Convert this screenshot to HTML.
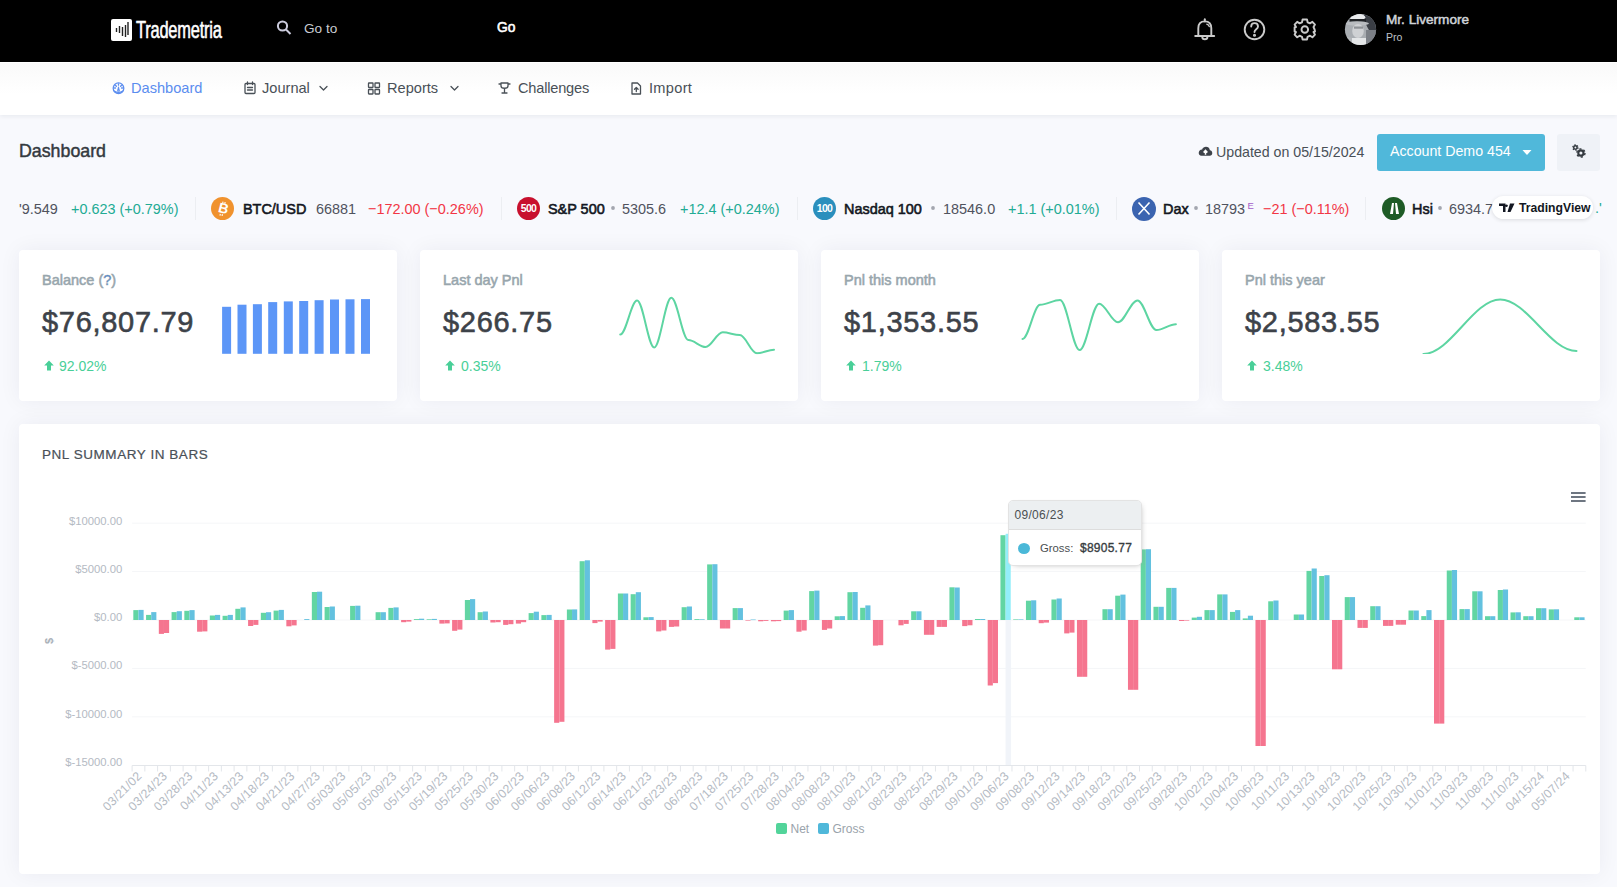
<!DOCTYPE html>
<html><head><meta charset="utf-8">
<style>
*{box-sizing:border-box;margin:0;padding:0}
html,body{width:1617px;height:887px;overflow:hidden}
body{background:#f8f9fd;font-family:"Liberation Sans",sans-serif;position:relative;color:#495057}
.abs{position:absolute;white-space:nowrap}
#hdr{position:absolute;left:0;top:0;width:1617px;height:62px;background:#000}
#nav{position:absolute;left:0;top:62px;width:1617px;height:53px;background:linear-gradient(#f9f9f9,#fff 60%);border-top:1px solid #fff;box-shadow:0 2px 4px rgba(15,34,58,.06)}
.card{position:absolute;background:#fff;border-radius:4px;box-shadow:0 0 22px rgba(18,38,63,.06)}
.yl{font-size:11.3px;fill:#b4bac3;font-family:"Liberation Sans",sans-serif}
.xl{font-size:12.3px;letter-spacing:0.15px;fill:#b4bac3;font-family:"Liberation Sans",sans-serif}
svg{position:absolute;left:0;top:0;overflow:visible}
.navt{font-size:14.6px;color:#495057;margin-top:1px}
.ctitle{font-size:14.5px;color:#98a6ad;-webkit-text-stroke:0.55px #98a6ad;margin-top:1.2px}
.cval{font-size:29px;color:#3d4249;-webkit-text-stroke:0.6px #3d4249;letter-spacing:0.7px;margin-top:0.8px}
.cpct{font-size:14px;color:#49cf98}
.tk{font-size:15.2px;transform:scaleX(0.95);transform-origin:0 50%;margin-top:0.3px}
.tkn{color:#131722;-webkit-text-stroke:0.6px #131722}
.tkp{color:#50535e}
.up{color:#22ab94}
.dn{color:#f23645}
.div{position:absolute;top:197px;width:1px;height:23px;background:#eceef2}
</style></head><body>
<div id="hdr"></div>
<!-- logo -->
<div class="abs" style="left:111px;top:19px;width:21px;height:22px;background:#fff;border-radius:2px"></div>
<svg width="1617" height="887" style="pointer-events:none">
  <g stroke="#222" stroke-width="1.4">
    <line x1="116.5" y1="28" x2="116.5" y2="32"/>
    <line x1="119.5" y1="26" x2="119.5" y2="33"/>
    <line x1="122.5" y1="27" x2="122.5" y2="36"/>
    <line x1="125.5" y1="25" x2="125.5" y2="37"/>
    <line x1="128" y1="22" x2="128" y2="35"/>
  </g>
</svg>
<div class="abs" style="left:136px;top:16.4px;font-size:24px;color:#fff;-webkit-text-stroke:0.6px #fff;transform:scaleX(0.685);transform-origin:0 0;letter-spacing:-0.3px">Trademetria</div>
<!-- search -->
<svg width="1617" height="887"><g fill="none" stroke="#ccd" stroke-width="2"><circle cx="282.5" cy="26" r="4.6"/><line x1="286" y1="29.5" x2="290.5" y2="34"/></g></svg>
<div class="abs" style="left:304px;top:20.5px;font-size:13.6px;color:#c9ccd2">Go to</div>
<div class="abs" style="left:497px;top:19.5px;font-size:13.8px;color:#fff;-webkit-text-stroke:0.55px #fff">Go</div>
<!-- right icons -->
<svg width="1617" height="887"><g fill="none" stroke="#cbcbcb" stroke-width="1.9" stroke-linecap="round" stroke-linejoin="round">
  <path d="M1195.2,36 L1214.2,36 M1198.3,35.5 L1198.3,28.3 C1198.3,23.6 1201.2,21.4 1204.8,21.4 C1208.4,21.4 1211.3,23.6 1211.3,28.3 L1211.3,35.5"/>
  <path d="M1202.3,37 C1202.3,40 1207.4,40 1207.4,37"/>
  <line x1="1204.8" y1="19.3" x2="1204.8" y2="21.4"/>
  <path d="M1206.8,24.2 C1208,24.6 1208.9,25.4 1209.3,26.6" stroke-width="1.4"/>
  <circle cx="1254.5" cy="29.5" r="9.8"/>
  <path d="M1251.2,26.5 C1251.2,22 1258,22 1258,26.5 C1258,29 1254.5,29.5 1254.5,32"/>
  <circle cx="1254.5" cy="35.2" r="0.6" fill="#c8c8c8"/>
  <circle cx="1304.8" cy="29.5" r="3.3"/>
  <path d="M1302.6,19.5 L1307,19.5 L1307.6,22.3 L1310,23.4 L1312.4,21.8 L1315,24.6 L1313.5,27 L1314.6,29.5 L1314.6,29.5 L1315,31.5 L1313.5,32 L1315,34.6 L1312.4,37.3 L1310,35.7 L1307.6,36.8 L1307,39.5 L1302.6,39.5 L1302,36.8 L1299.6,35.7 L1297.2,37.3 L1294.6,34.6 L1296,32 L1294.6,31.5 L1294.6,27.5 L1296,27 L1294.6,24.6 L1297.2,21.8 L1299.6,23.4 L1302,22.3 Z"/>
</g></svg>
<!-- avatar -->
<svg width="1617" height="887"><defs><clipPath id="av"><circle cx="1360.5" cy="29.5" r="15.6"/></clipPath></defs>
<g clip-path="url(#av)">
<rect x="1340" y="10" width="40" height="40" fill="#a9adb2"/>
<path d="M1364,12 L1380,12 L1380,34 L1372,34 C1368,30 1366,24 1364,20 Z" fill="#3a3e45"/>
<path d="M1366,30 L1380,30 L1380,46 L1366,46 Z" fill="#7c8087"/>
<ellipse cx="1357.5" cy="17.3" rx="7.8" ry="3.4" fill="#e9ebed"/>
<rect x="1349.5" y="19" width="16.5" height="2.8" fill="#1f2226"/>
<ellipse cx="1357" cy="23.5" rx="12" ry="2.2" fill="#b9bcc0"/>
<ellipse cx="1358" cy="31" rx="5.8" ry="7" fill="#cfd1d4"/>
<rect x="1354" y="26.5" width="9" height="2.2" fill="#8d9196"/>
<path d="M1352,38 L1366,38 L1366,48 L1352,48 Z" fill="#e4e6e8"/>
<path d="M1344,36 L1352,38 L1352,48 L1344,48 Z" fill="#b3b6ba"/>
</g></svg>
<div class="abs" style="left:1386px;top:12px;font-size:13.6px;color:#cfd3d8;-webkit-text-stroke:0.5px #cfd3d8">Mr. Livermore</div>
<div class="abs" style="left:1386px;top:31px;font-size:10.5px;color:#bfc3c8">Pro</div>

<!-- nav -->
<div id="nav"></div>
<svg width="1617" height="887"><g fill="none" stroke-width="1.3" stroke-linecap="round" stroke-linejoin="round">
  <g stroke="#5b8def"><circle cx="118.5" cy="88.2" r="5.3"/><path d="M114.6,91.2 C116.5,92.6 120.5,92.6 122.4,91.2 M118.5,84 L118.5,85.2 M115.6,85.5 L116.4,86.3 M121.4,85.5 L120.6,86.3 M114.5,88 L115.5,88 M122.5,88 L121.5,88"/><path d="M117.6,90.6 L118.5,86.8 L119.4,90.6 Z" fill="#5b8def" stroke-width="0.8"/></g>
  <g stroke="#495057"><rect x="245" y="83.5" width="10" height="10" rx="1"/><path d="M247.5,82 L247.5,84.5 M252.5,82 L252.5,84.5 M247.5,87.5 L252.5,87.5 M247.5,90 L252.5,90"/>
  <path d="M320,86.5 L323.5,90 L327,86.5"/>
  <rect x="368.5" y="83" width="4.5" height="4.5" rx=".5"/><rect x="375" y="83" width="4.5" height="4.5" rx=".5"/><rect x="368.5" y="89.5" width="4.5" height="4.5" rx=".5"/><rect x="375" y="89.5" width="4.5" height="4.5" rx=".5"/>
  <path d="M451,86.5 L454.5,90 L458,86.5"/>
  <path d="M501,83 L508,83 L508,86 C508,89 501,89 501,86 Z M499,84 L501,84 M508,84 L510,84 M504.5,89 L504.5,92 M502,93 L507,93"/>
  <path d="M632,83 L637.5,83 L640.5,86 L640.5,94 L632,94 Z M636.3,91.5 L636.3,87.5 M634.5,89.3 L636.3,87.5 L638.1,89.3"/>
  </g></g></svg>
<div class="abs navt" style="left:131px;top:79px;color:#5b8def">Dashboard</div>
<div class="abs navt" style="left:262px;top:79px">Journal</div>
<div class="abs navt" style="left:387px;top:79px">Reports</div>
<div class="abs navt" style="left:518px;top:79px;letter-spacing:-0.2px">Challenges</div>
<div class="abs navt" style="left:649px;top:79px;letter-spacing:0.3px">Import</div>

<!-- title row -->
<div class="abs" style="left:19px;top:141px;font-size:17.8px;color:#343a40;-webkit-text-stroke:0.45px #343a40">Dashboard</div>
<svg width="1617" height="887"><path d="M1201.5,155.8 L1209.8,155.8 C1213,155.8 1213.2,150.6 1209.9,150.2 C1209.4,146 1203.4,145.6 1202.1,149.6 C1197.9,149.8 1197.6,155.8 1201.5,155.8 Z" fill="#3d4249"/><path d="M1205.5,154.8 L1205.5,150.8 M1203.6,152.6 L1205.5,150.4 L1207.4,152.6" stroke="#fff" stroke-width="1.5" fill="none"/></svg>
<div class="abs" style="left:1216px;top:144px;font-size:14.2px;color:#495057">Updated on 05/15/2024</div>
<div class="abs" style="left:1377px;top:134px;width:168px;height:37px;background:#50b8da;border-radius:3px"></div>
<div class="abs" style="left:1390px;top:143px;font-size:14.2px;color:#fff">Account Demo 454</div>
<svg width="1617" height="887"><path d="M1522.5,150 L1531.5,150 L1527,155 Z" fill="#fff"/></svg>
<div class="abs" style="left:1557px;top:134px;width:43px;height:37px;background:#eff2f7;border-radius:3px"></div>
<svg width="1617" height="887"><g fill="none" stroke="#343a40">
<circle cx="1575.4" cy="147.5" r="1.7" stroke-width="1.5"/><circle cx="1575.4" cy="147.5" r="2.6" stroke-width="1.3" stroke-dasharray="1.36 1.36"/>
<circle cx="1580.9" cy="153" r="2.6" stroke-width="2.1"/><circle cx="1580.9" cy="153" r="4.1" stroke-width="1.4" stroke-dasharray="2.15 2.15"/>
</g></svg>

<!-- ticker -->
<div class="abs tk" style="left:19px;top:200px"><span class="tkp">'9.549</span></div>
<div class="abs tk up" style="left:71px;top:200px">+0.623 (+0.79%)</div>
<div class="div" style="left:195px"></div>
<div class="abs" style="left:211px;top:197px;width:23px;height:23px;border-radius:50%;background:#f0922e"></div><div class="abs" style="left:217.5px;top:201px;width:11px;height:15px;color:#fff;font-size:14px;font-weight:bold;line-height:15px;text-align:center;transform:rotate(14deg)">B</div><svg width="1617" height="887"><g stroke="#fff" stroke-width="1.1"><line x1="223" y1="201.6" x2="222.7" y2="203.4"/><line x1="225.1" y1="202" x2="224.8" y2="203.8"/><line x1="220.3" y1="213.8" x2="220" y2="215.6"/><line x1="222.4" y1="214.2" x2="222.1" y2="216"/></g></svg>
<div class="abs tk tkn" style="left:243px;top:200px">BTC/USD</div>
<div class="abs tk tkp" style="left:316px;top:200px">66881</div>
<div class="abs tk dn" style="left:368px;top:200px">−172.00 (−0.26%)</div>
<div class="div" style="left:501px"></div>
<div class="abs" style="left:517px;top:197px;width:23px;height:23px;border-radius:50%;background:#c8102e;color:#fff;font-size:10.5px;font-weight:bold;text-align:center;line-height:23px;letter-spacing:-0.7px">500</div>
<div class="abs tk tkn" style="left:548px;top:200px">S&amp;P 500</div>
<div class="abs tk tkp" style="left:622px;top:200px">5305.6</div>
<div class="abs tk up" style="left:680px;top:200px">+12.4 (+0.24%)</div>
<div class="div" style="left:797px"></div>
<div class="abs" style="left:813px;top:197px;width:23px;height:23px;border-radius:50%;background:#2a8fbd;color:#fff;font-size:10.5px;font-weight:bold;text-align:center;line-height:23px;letter-spacing:-0.7px">100</div>
<div class="abs tk tkn" style="left:844px;top:200px">Nasdaq 100</div>
<div class="abs tk tkp" style="left:943px;top:200px">18546.0</div>
<div class="abs tk up" style="left:1008px;top:200px">+1.1 (+0.01%)</div>
<div class="div" style="left:1116px"></div>
<div class="abs" style="left:1132px;top:197px;width:24px;height:24px;border-radius:50%;background:#3b64b0"></div>
<svg width="1617" height="887"><path d="M1138.5,202.5 L1149.5,214.5 M1149.5,202.5 L1138.5,214.5" stroke="#fff" stroke-width="1.6"/></svg>
<div class="abs tk tkn" style="left:1163px;top:200px">Dax</div>
<div class="abs tk tkp" style="left:1205px;top:200px">18793</div>
<div class="abs" style="left:1247.5px;top:200px;font-size:9.5px;color:#a35cc9">E</div>
<div class="abs tk dn" style="left:1263px;top:200px">−21 (−0.11%)</div>
<div class="div" style="left:1365px"></div>
<div class="abs" style="left:1382px;top:197px;width:23px;height:23px;border-radius:50%;background:#1e5b26"></div>
<svg width="1617" height="887"><path d="M1390,214 L1392,203 L1394,203 L1393,214 Z M1396,214 L1395,203 L1397,203 L1399,214 Z" fill="#fff"/></svg>
<div class="abs tk tkn" style="left:1412px;top:200px">Hsi</div>
<div class="abs tk tkp" style="left:1449px;top:200px">6934.7</div>
<div class="abs" style="left:1595px;top:200px;font-size:14.5px;color:#22ab94">.'</div>
<div class="abs" style="left:1492px;top:196px;width:101px;height:23px;border-radius:12px;background:#fff;box-shadow:0 1px 4px rgba(0,0,0,.12)"></div>
<svg width="1617" height="887"><path d="M1499,203.5 L1505.5,203.5 L1505.5,212 L1503,212 L1503,206 L1499,206 Z M1506.5,207 A1.3,1.3 0 1 1 1506.6,207 Z M1510,203.5 L1514.5,203.5 L1510.5,212 L1507.5,212 Z" fill="#131722"/></svg>
<div class="abs" style="left:1519px;top:201px;font-size:12.2px;font-weight:bold;color:#131722">TradingView</div>
<!-- ticker dots -->
<svg width="1617" height="887"><g fill="#a3a6af"><circle cx="613" cy="208" r="1.9"/><circle cx="933" cy="208" r="1.9"/><circle cx="1196" cy="208" r="1.9"/><circle cx="1440" cy="208" r="1.9"/></g></svg>

<!-- cards -->
<div class="card" style="left:19px;top:250px;width:378px;height:151px"></div>
<div class="card" style="left:420px;top:250px;width:378px;height:151px"></div>
<div class="card" style="left:821px;top:250px;width:378px;height:151px"></div>
<div class="card" style="left:1222px;top:250px;width:378px;height:151px"></div>

<div class="abs ctitle" style="left:42px;top:271px">Balance (<span style="color:#3b7ddd">?</span>)</div>
<div class="abs cval" style="left:42px;top:305px">$76,807.79</div>
<div class="abs ctitle" style="left:443px;top:271px">Last day Pnl</div>
<div class="abs cval" style="left:443px;top:305px">$266.75</div>
<div class="abs ctitle" style="left:844px;top:271px">Pnl this month</div>
<div class="abs cval" style="left:844px;top:305px">$1,353.55</div>
<div class="abs ctitle" style="left:1245px;top:271px">Pnl this year</div>
<div class="abs cval" style="left:1245px;top:305px">$2,583.55</div>

<svg width="1617" height="887"><g fill="#49cf98">
<path d="M49,360.5 L53.8,365.5 L51,365.5 L51,370.5 L47,370.5 L47,365.5 L44.2,365.5 Z"/>
<path d="M450,360.5 L454.8,365.5 L452,365.5 L452,370.5 L448,370.5 L448,365.5 L445.2,365.5 Z"/>
<path d="M851,360.5 L855.8,365.5 L853,365.5 L853,370.5 L849,370.5 L849,365.5 L846.2,365.5 Z"/>
<path d="M1252,360.5 L1256.8,365.5 L1254,365.5 L1254,370.5 L1250,370.5 L1250,365.5 L1247.2,365.5 Z"/>
</g></svg>
<div class="abs cpct" style="left:59px;top:358px">92.02%</div>
<div class="abs cpct" style="left:461px;top:358px">0.35%</div>
<div class="abs cpct" style="left:862px;top:358px">1.79%</div>
<div class="abs cpct" style="left:1263px;top:358px">3.48%</div>

<!-- balance bars + sparklines -->
<svg width="1617" height="887"><g fill="#5c96f7">
<rect x="222.1" y="306.8" width="9" height="47"/>
<rect x="237.5" y="304.7" width="9" height="49.1"/>
<rect x="252.9" y="304.2" width="9" height="49.6"/>
<rect x="268.2" y="302.1" width="9" height="51.7"/>
<rect x="283.8" y="301.4" width="9" height="52.4"/>
<rect x="299.2" y="301" width="9" height="52.8"/>
<rect x="314.6" y="300.2" width="9" height="53.6"/>
<rect x="330.0" y="299.5" width="9" height="54.3"/>
<rect x="345.5" y="299.3" width="9" height="54.5"/>
<rect x="361.0" y="299.1" width="9" height="54.7"/>
</g>
<defs><clipPath id="c1"><rect x="600" y="290" width="200" height="64.5"/></clipPath><clipPath id="c3"><rect x="1400" y="290" width="200" height="64"/></clipPath></defs>
<g fill="none" stroke="#5dd5a2" stroke-width="2" stroke-linecap="round">
<path clip-path="url(#c1)" d="M620.2,334.6 C626.1,334.6 631.2,300.6 637.1,300.6 C643.1,300.6 648.2,347.4 654.2,347.4 C660.2,347.4 665.3,297.8 671.3,297.8 C677.3,297.8 682.4,340.1 688.4,340.1 C694.4,340.1 699.6,347.0 705.6,347.0 C711.6,347.0 716.7,332.3 722.7,332.3 C728.7,332.3 733.8,335.1 739.8,335.1 C745.8,335.1 750.9,353.3 756.9,353.3 C762.9,353.3 768.0,349.8 774.0,349.8"/>
<path d="M1022.5,339.0 C1028.7,339.0 1033.9,304.8 1040.1,304.8 C1047.1,304.8 1053.1,300.0 1060.1,300.0 C1066.9,300.0 1072.8,350.1 1079.6,350.1 C1086.4,350.1 1092.3,303.7 1099.1,303.7 C1105.7,303.7 1111.4,322.3 1118.0,322.3 C1124.8,322.3 1130.7,300.4 1137.5,300.4 C1144.1,300.4 1149.8,330.1 1156.4,330.1 C1163.2,330.1 1169.1,324.2 1175.9,324.2"/>
<path clip-path="url(#c3)" d="M1423.4,354.0 C1450.3,354.0 1473.3,299.5 1500.2,299.5 C1526.9,299.5 1549.8,351.0 1576.5,351.0"/>
</g></svg>

<!-- chart card -->
<div class="card" style="left:19px;top:424px;width:1581px;height:450px"></div>
<div class="abs" style="left:42px;top:447px;font-size:13.5px;color:#495057;letter-spacing:0.55px;-webkit-text-stroke:0.2px #495057">PNL SUMMARY IN BARS</div>
<svg width="1617" height="887">
<line x1="132.1" x2="1585.8" y1="523.16" y2="523.16" stroke="#f5f6f8" stroke-width="1"/>
<text x="122.3" y="525.20" text-anchor="end" class="yl">$10000.00</text>
<line x1="132.1" x2="1585.8" y1="571.58" y2="571.58" stroke="#f5f6f8" stroke-width="1"/>
<text x="122.3" y="573.28" text-anchor="end" class="yl">$5000.00</text>
<line x1="132.1" x2="1585.8" y1="620.00" y2="620.00" stroke="#f5f6f8" stroke-width="1"/>
<text x="122.3" y="621.36" text-anchor="end" class="yl">$0.00</text>
<line x1="132.1" x2="1585.8" y1="668.42" y2="668.42" stroke="#f5f6f8" stroke-width="1"/>
<text x="122.3" y="669.44" text-anchor="end" class="yl">$-5000.00</text>
<line x1="132.1" x2="1585.8" y1="716.84" y2="716.84" stroke="#f5f6f8" stroke-width="1"/>
<text x="122.3" y="717.52" text-anchor="end" class="yl">$-10000.00</text>
<text x="122.3" y="765.60" text-anchor="end" class="yl">$-15000.00</text>
<rect x="1005.57" y="620.00" width="5.5" height="145.50" fill="#f1f4f9"/>
<rect x="133.32" y="610.10" width="5.15" height="9.90" fill="#62d5a3"/>
<rect x="138.47" y="609.90" width="5.15" height="10.10" fill="#63c1df"/>
<rect x="146.07" y="614.90" width="5.15" height="5.10" fill="#62d5a3"/>
<rect x="151.22" y="612.10" width="5.15" height="7.90" fill="#63c1df"/>
<rect x="158.82" y="620.00" width="5.15" height="13.90" fill="#f5758f"/>
<rect x="163.97" y="620.00" width="5.15" height="13.00" fill="#f5758f"/>
<rect x="171.58" y="612.10" width="5.15" height="7.90" fill="#62d5a3"/>
<rect x="176.73" y="611.20" width="5.15" height="8.80" fill="#63c1df"/>
<rect x="184.33" y="610.80" width="5.15" height="9.20" fill="#62d5a3"/>
<rect x="189.48" y="610.10" width="5.15" height="9.90" fill="#63c1df"/>
<rect x="197.08" y="620.00" width="5.15" height="11.70" fill="#f5758f"/>
<rect x="202.23" y="620.00" width="5.15" height="11.40" fill="#f5758f"/>
<rect x="209.83" y="615.50" width="5.15" height="4.50" fill="#62d5a3"/>
<rect x="214.98" y="614.90" width="5.15" height="5.10" fill="#63c1df"/>
<rect x="222.58" y="615.80" width="5.15" height="4.20" fill="#62d5a3"/>
<rect x="227.73" y="614.90" width="5.15" height="5.10" fill="#63c1df"/>
<rect x="235.33" y="608.80" width="5.15" height="11.20" fill="#62d5a3"/>
<rect x="240.48" y="607.40" width="5.15" height="12.60" fill="#63c1df"/>
<rect x="248.09" y="620.00" width="5.15" height="6.00" fill="#f5758f"/>
<rect x="253.24" y="620.00" width="5.15" height="4.90" fill="#f5758f"/>
<rect x="260.84" y="612.80" width="5.15" height="7.20" fill="#62d5a3"/>
<rect x="265.99" y="612.20" width="5.15" height="7.80" fill="#63c1df"/>
<rect x="273.59" y="610.60" width="5.15" height="9.40" fill="#62d5a3"/>
<rect x="278.74" y="609.90" width="5.15" height="10.10" fill="#63c1df"/>
<rect x="286.34" y="620.00" width="5.15" height="6.30" fill="#f5758f"/>
<rect x="291.49" y="620.00" width="5.15" height="5.40" fill="#f5758f"/>
<rect x="304.24" y="619.10" width="5.15" height="0.90" fill="#63c1df"/>
<rect x="311.84" y="592.00" width="5.15" height="28.00" fill="#62d5a3"/>
<rect x="316.99" y="591.70" width="5.15" height="28.30" fill="#63c1df"/>
<rect x="324.60" y="607.00" width="5.15" height="13.00" fill="#62d5a3"/>
<rect x="329.75" y="606.50" width="5.15" height="13.50" fill="#63c1df"/>
<rect x="350.10" y="605.90" width="5.15" height="14.10" fill="#62d5a3"/>
<rect x="355.25" y="605.70" width="5.15" height="14.30" fill="#63c1df"/>
<rect x="375.60" y="612.20" width="5.15" height="7.80" fill="#62d5a3"/>
<rect x="380.75" y="612.20" width="5.15" height="7.80" fill="#63c1df"/>
<rect x="388.36" y="607.90" width="5.15" height="12.10" fill="#62d5a3"/>
<rect x="393.51" y="607.40" width="5.15" height="12.60" fill="#63c1df"/>
<rect x="401.11" y="620.00" width="5.15" height="2.20" fill="#f5758f"/>
<rect x="406.26" y="620.00" width="5.15" height="1.60" fill="#f5758f"/>
<rect x="413.86" y="619.10" width="5.15" height="0.90" fill="#62d5a3"/>
<rect x="419.01" y="618.70" width="5.15" height="1.30" fill="#63c1df"/>
<rect x="426.61" y="619.30" width="5.15" height="0.70" fill="#62d5a3"/>
<rect x="431.76" y="618.90" width="5.15" height="1.10" fill="#63c1df"/>
<rect x="439.36" y="620.00" width="5.15" height="3.60" fill="#f5758f"/>
<rect x="444.51" y="620.00" width="5.15" height="3.40" fill="#f5758f"/>
<rect x="452.11" y="620.00" width="5.15" height="10.80" fill="#f5758f"/>
<rect x="457.26" y="620.00" width="5.15" height="9.60" fill="#f5758f"/>
<rect x="464.87" y="600.00" width="5.15" height="20.00" fill="#62d5a3"/>
<rect x="470.02" y="599.10" width="5.15" height="20.90" fill="#63c1df"/>
<rect x="477.62" y="612.20" width="5.15" height="7.80" fill="#62d5a3"/>
<rect x="482.77" y="611.50" width="5.15" height="8.50" fill="#63c1df"/>
<rect x="490.37" y="620.00" width="5.15" height="2.50" fill="#f5758f"/>
<rect x="495.52" y="620.00" width="5.15" height="2.20" fill="#f5758f"/>
<rect x="503.12" y="620.00" width="5.15" height="4.90" fill="#f5758f"/>
<rect x="508.27" y="620.00" width="5.15" height="4.20" fill="#f5758f"/>
<rect x="515.87" y="620.00" width="5.15" height="3.60" fill="#f5758f"/>
<rect x="521.02" y="620.00" width="5.15" height="2.20" fill="#f5758f"/>
<rect x="528.62" y="613.10" width="5.15" height="6.90" fill="#62d5a3"/>
<rect x="533.77" y="611.70" width="5.15" height="8.30" fill="#63c1df"/>
<rect x="541.38" y="615.10" width="5.15" height="4.90" fill="#62d5a3"/>
<rect x="546.53" y="614.90" width="5.15" height="5.10" fill="#63c1df"/>
<rect x="554.13" y="620.00" width="5.15" height="102.80" fill="#f5758f"/>
<rect x="559.28" y="620.00" width="5.15" height="101.80" fill="#f5758f"/>
<rect x="566.88" y="609.50" width="5.15" height="10.50" fill="#62d5a3"/>
<rect x="572.03" y="609.40" width="5.15" height="10.60" fill="#63c1df"/>
<rect x="579.63" y="561.20" width="5.15" height="58.80" fill="#62d5a3"/>
<rect x="584.78" y="560.30" width="5.15" height="59.70" fill="#63c1df"/>
<rect x="592.38" y="620.00" width="5.15" height="3.10" fill="#f5758f"/>
<rect x="597.53" y="620.00" width="5.15" height="1.60" fill="#f5758f"/>
<rect x="605.13" y="620.00" width="5.15" height="29.60" fill="#f5758f"/>
<rect x="610.28" y="620.00" width="5.15" height="28.90" fill="#f5758f"/>
<rect x="617.89" y="593.50" width="5.15" height="26.50" fill="#62d5a3"/>
<rect x="623.04" y="593.50" width="5.15" height="26.50" fill="#63c1df"/>
<rect x="630.64" y="594.20" width="5.15" height="25.80" fill="#62d5a3"/>
<rect x="635.79" y="592.20" width="5.15" height="27.80" fill="#63c1df"/>
<rect x="643.39" y="617.30" width="5.15" height="2.70" fill="#62d5a3"/>
<rect x="648.54" y="617.10" width="5.15" height="2.90" fill="#63c1df"/>
<rect x="656.14" y="620.00" width="5.15" height="11.40" fill="#f5758f"/>
<rect x="661.29" y="620.00" width="5.15" height="10.50" fill="#f5758f"/>
<rect x="668.89" y="620.00" width="5.15" height="6.90" fill="#f5758f"/>
<rect x="674.04" y="620.00" width="5.15" height="6.50" fill="#f5758f"/>
<rect x="681.65" y="607.20" width="5.15" height="12.80" fill="#62d5a3"/>
<rect x="686.80" y="606.50" width="5.15" height="13.50" fill="#63c1df"/>
<rect x="694.40" y="619.10" width="5.15" height="0.90" fill="#62d5a3"/>
<rect x="699.55" y="619.30" width="5.15" height="0.70" fill="#63c1df"/>
<rect x="707.15" y="564.40" width="5.15" height="55.60" fill="#62d5a3"/>
<rect x="712.30" y="564.20" width="5.15" height="55.80" fill="#63c1df"/>
<rect x="719.90" y="620.00" width="5.15" height="8.50" fill="#f5758f"/>
<rect x="725.05" y="620.00" width="5.15" height="8.50" fill="#f5758f"/>
<rect x="732.65" y="608.10" width="5.15" height="11.90" fill="#62d5a3"/>
<rect x="737.80" y="608.10" width="5.15" height="11.90" fill="#63c1df"/>
<rect x="745.40" y="620.00" width="5.15" height="0.60" fill="#f5758f"/>
<rect x="750.55" y="619.50" width="5.15" height="0.60" fill="#63c1df"/>
<rect x="758.16" y="620.00" width="5.15" height="1.30" fill="#f5758f"/>
<rect x="763.31" y="620.00" width="5.15" height="0.90" fill="#f5758f"/>
<rect x="770.91" y="620.00" width="5.15" height="1.30" fill="#f5758f"/>
<rect x="776.06" y="620.00" width="5.15" height="1.10" fill="#f5758f"/>
<rect x="783.66" y="610.60" width="5.15" height="9.40" fill="#62d5a3"/>
<rect x="788.81" y="610.10" width="5.15" height="9.90" fill="#63c1df"/>
<rect x="796.41" y="620.00" width="5.15" height="11.70" fill="#f5758f"/>
<rect x="801.56" y="620.00" width="5.15" height="10.50" fill="#f5758f"/>
<rect x="809.16" y="591.10" width="5.15" height="28.90" fill="#62d5a3"/>
<rect x="814.31" y="590.60" width="5.15" height="29.40" fill="#63c1df"/>
<rect x="821.91" y="620.00" width="5.15" height="9.90" fill="#f5758f"/>
<rect x="827.06" y="620.00" width="5.15" height="8.50" fill="#f5758f"/>
<rect x="834.67" y="616.30" width="5.15" height="3.70" fill="#62d5a3"/>
<rect x="839.82" y="616.10" width="5.15" height="3.90" fill="#63c1df"/>
<rect x="847.42" y="592.20" width="5.15" height="27.80" fill="#62d5a3"/>
<rect x="852.57" y="592.00" width="5.15" height="28.00" fill="#63c1df"/>
<rect x="860.17" y="607.80" width="5.15" height="12.20" fill="#62d5a3"/>
<rect x="865.32" y="605.40" width="5.15" height="14.60" fill="#63c1df"/>
<rect x="872.92" y="620.00" width="5.15" height="25.60" fill="#f5758f"/>
<rect x="878.07" y="620.00" width="5.15" height="25.20" fill="#f5758f"/>
<rect x="898.43" y="620.00" width="5.15" height="5.30" fill="#f5758f"/>
<rect x="903.58" y="620.00" width="5.15" height="3.90" fill="#f5758f"/>
<rect x="911.18" y="611.30" width="5.15" height="8.70" fill="#62d5a3"/>
<rect x="916.33" y="611.30" width="5.15" height="8.70" fill="#63c1df"/>
<rect x="923.93" y="620.00" width="5.15" height="14.80" fill="#f5758f"/>
<rect x="929.08" y="620.00" width="5.15" height="14.80" fill="#f5758f"/>
<rect x="936.68" y="620.00" width="5.15" height="6.90" fill="#f5758f"/>
<rect x="941.83" y="620.00" width="5.15" height="6.90" fill="#f5758f"/>
<rect x="949.43" y="587.30" width="5.15" height="32.70" fill="#62d5a3"/>
<rect x="954.58" y="587.50" width="5.15" height="32.50" fill="#63c1df"/>
<rect x="962.18" y="620.00" width="5.15" height="6.10" fill="#f5758f"/>
<rect x="967.33" y="620.00" width="5.15" height="5.30" fill="#f5758f"/>
<rect x="974.94" y="619.00" width="5.15" height="1.00" fill="#62d5a3"/>
<rect x="980.09" y="619.00" width="5.15" height="1.00" fill="#63c1df"/>
<rect x="987.69" y="620.00" width="5.15" height="65.50" fill="#f5758f"/>
<rect x="992.84" y="620.00" width="5.15" height="63.10" fill="#f5758f"/>
<rect x="1000.44" y="535.20" width="5.15" height="84.80" fill="#62d5a3"/>
<rect x="1005.59" y="533.80" width="5.15" height="86.20" fill="#93eefa"/>
<rect x="1013.19" y="619.40" width="5.15" height="0.60" fill="#62d5a3"/>
<rect x="1018.34" y="619.40" width="5.15" height="0.60" fill="#63c1df"/>
<rect x="1025.94" y="600.70" width="5.15" height="19.30" fill="#62d5a3"/>
<rect x="1031.09" y="600.30" width="5.15" height="19.70" fill="#63c1df"/>
<rect x="1038.69" y="620.00" width="5.15" height="3.20" fill="#f5758f"/>
<rect x="1043.84" y="620.00" width="5.15" height="2.60" fill="#f5758f"/>
<rect x="1051.45" y="599.50" width="5.15" height="20.50" fill="#62d5a3"/>
<rect x="1056.60" y="598.50" width="5.15" height="21.50" fill="#63c1df"/>
<rect x="1064.20" y="620.00" width="5.15" height="13.40" fill="#f5758f"/>
<rect x="1069.35" y="620.00" width="5.15" height="12.60" fill="#f5758f"/>
<rect x="1076.95" y="620.00" width="5.15" height="56.80" fill="#f5758f"/>
<rect x="1082.10" y="620.00" width="5.15" height="56.80" fill="#f5758f"/>
<rect x="1102.45" y="609.20" width="5.15" height="10.80" fill="#62d5a3"/>
<rect x="1107.60" y="609.20" width="5.15" height="10.80" fill="#63c1df"/>
<rect x="1115.21" y="595.70" width="5.15" height="24.30" fill="#62d5a3"/>
<rect x="1120.36" y="594.60" width="5.15" height="25.40" fill="#63c1df"/>
<rect x="1127.96" y="620.00" width="5.15" height="69.80" fill="#f5758f"/>
<rect x="1133.11" y="620.00" width="5.15" height="69.80" fill="#f5758f"/>
<rect x="1140.71" y="549.40" width="5.15" height="70.60" fill="#62d5a3"/>
<rect x="1145.86" y="549.20" width="5.15" height="70.80" fill="#63c1df"/>
<rect x="1153.46" y="606.80" width="5.15" height="13.20" fill="#62d5a3"/>
<rect x="1158.61" y="606.80" width="5.15" height="13.20" fill="#63c1df"/>
<rect x="1166.21" y="587.90" width="5.15" height="32.10" fill="#62d5a3"/>
<rect x="1171.36" y="587.90" width="5.15" height="32.10" fill="#63c1df"/>
<rect x="1178.96" y="620.00" width="5.15" height="1.00" fill="#f5758f"/>
<rect x="1184.11" y="620.00" width="5.15" height="0.60" fill="#f5758f"/>
<rect x="1191.72" y="617.60" width="5.15" height="2.40" fill="#62d5a3"/>
<rect x="1196.87" y="616.80" width="5.15" height="3.20" fill="#63c1df"/>
<rect x="1204.47" y="610.10" width="5.15" height="9.90" fill="#62d5a3"/>
<rect x="1209.62" y="610.10" width="5.15" height="9.90" fill="#63c1df"/>
<rect x="1217.22" y="594.40" width="5.15" height="25.60" fill="#62d5a3"/>
<rect x="1222.37" y="594.40" width="5.15" height="25.60" fill="#63c1df"/>
<rect x="1229.97" y="611.90" width="5.15" height="8.10" fill="#62d5a3"/>
<rect x="1235.12" y="610.10" width="5.15" height="9.90" fill="#63c1df"/>
<rect x="1242.72" y="618.40" width="5.15" height="1.60" fill="#62d5a3"/>
<rect x="1247.87" y="615.70" width="5.15" height="4.30" fill="#63c1df"/>
<rect x="1255.47" y="620.00" width="5.15" height="126.00" fill="#f5758f"/>
<rect x="1260.62" y="620.00" width="5.15" height="126.00" fill="#f5758f"/>
<rect x="1268.23" y="601.30" width="5.15" height="18.70" fill="#62d5a3"/>
<rect x="1273.38" y="600.50" width="5.15" height="19.50" fill="#63c1df"/>
<rect x="1293.73" y="614.50" width="5.15" height="5.50" fill="#62d5a3"/>
<rect x="1298.88" y="614.50" width="5.15" height="5.50" fill="#63c1df"/>
<rect x="1306.48" y="570.90" width="5.15" height="49.10" fill="#62d5a3"/>
<rect x="1311.63" y="568.50" width="5.15" height="51.50" fill="#63c1df"/>
<rect x="1319.23" y="576.00" width="5.15" height="44.00" fill="#62d5a3"/>
<rect x="1324.38" y="575.20" width="5.15" height="44.80" fill="#63c1df"/>
<rect x="1331.98" y="620.00" width="5.15" height="49.30" fill="#f5758f"/>
<rect x="1337.13" y="620.00" width="5.15" height="49.30" fill="#f5758f"/>
<rect x="1344.74" y="597.10" width="5.15" height="22.90" fill="#62d5a3"/>
<rect x="1349.89" y="597.10" width="5.15" height="22.90" fill="#63c1df"/>
<rect x="1357.49" y="620.00" width="5.15" height="7.90" fill="#f5758f"/>
<rect x="1362.64" y="620.00" width="5.15" height="7.90" fill="#f5758f"/>
<rect x="1370.24" y="606.20" width="5.15" height="13.80" fill="#62d5a3"/>
<rect x="1375.39" y="606.20" width="5.15" height="13.80" fill="#63c1df"/>
<rect x="1382.99" y="620.00" width="5.15" height="5.90" fill="#f5758f"/>
<rect x="1388.14" y="620.00" width="5.15" height="5.90" fill="#f5758f"/>
<rect x="1395.74" y="620.00" width="5.15" height="4.70" fill="#f5758f"/>
<rect x="1400.89" y="620.00" width="5.15" height="4.70" fill="#f5758f"/>
<rect x="1408.50" y="610.50" width="5.15" height="9.50" fill="#62d5a3"/>
<rect x="1413.65" y="610.50" width="5.15" height="9.50" fill="#63c1df"/>
<rect x="1421.25" y="616.10" width="5.15" height="3.90" fill="#62d5a3"/>
<rect x="1426.40" y="610.10" width="5.15" height="9.90" fill="#63c1df"/>
<rect x="1434.00" y="620.00" width="5.15" height="103.60" fill="#f5758f"/>
<rect x="1439.15" y="620.00" width="5.15" height="103.60" fill="#f5758f"/>
<rect x="1446.75" y="570.50" width="5.15" height="49.50" fill="#62d5a3"/>
<rect x="1451.90" y="570.00" width="5.15" height="50.00" fill="#63c1df"/>
<rect x="1459.50" y="609.10" width="5.15" height="10.90" fill="#62d5a3"/>
<rect x="1464.65" y="609.10" width="5.15" height="10.90" fill="#63c1df"/>
<rect x="1472.25" y="591.30" width="5.15" height="28.70" fill="#62d5a3"/>
<rect x="1477.40" y="591.30" width="5.15" height="28.70" fill="#63c1df"/>
<rect x="1485.01" y="616.20" width="5.15" height="3.80" fill="#62d5a3"/>
<rect x="1490.16" y="616.20" width="5.15" height="3.80" fill="#63c1df"/>
<rect x="1497.76" y="590.00" width="5.15" height="30.00" fill="#62d5a3"/>
<rect x="1502.91" y="589.50" width="5.15" height="30.50" fill="#63c1df"/>
<rect x="1510.51" y="612.40" width="5.15" height="7.60" fill="#62d5a3"/>
<rect x="1515.66" y="612.30" width="5.15" height="7.70" fill="#63c1df"/>
<rect x="1523.26" y="616.20" width="5.15" height="3.80" fill="#62d5a3"/>
<rect x="1528.41" y="616.20" width="5.15" height="3.80" fill="#63c1df"/>
<rect x="1536.01" y="608.20" width="5.15" height="11.80" fill="#62d5a3"/>
<rect x="1541.16" y="608.20" width="5.15" height="11.80" fill="#63c1df"/>
<rect x="1548.76" y="609.40" width="5.15" height="10.60" fill="#62d5a3"/>
<rect x="1553.91" y="609.30" width="5.15" height="10.70" fill="#63c1df"/>
<rect x="1574.27" y="617.30" width="5.15" height="2.70" fill="#62d5a3"/>
<rect x="1579.42" y="617.30" width="5.15" height="2.70" fill="#63c1df"/>
<line x1="132.1" x2="1585.8" y1="765.5" y2="765.5" stroke="#e3e6ea" stroke-width="1"/>
<line x1="132.10" x2="132.10" y1="765.5" y2="771.5" stroke="#e3e6ea" stroke-width="1"/>
<line x1="144.85" x2="144.85" y1="765.5" y2="771.5" stroke="#e3e6ea" stroke-width="1"/>
<line x1="157.60" x2="157.60" y1="765.5" y2="771.5" stroke="#e3e6ea" stroke-width="1"/>
<line x1="170.36" x2="170.36" y1="765.5" y2="771.5" stroke="#e3e6ea" stroke-width="1"/>
<line x1="183.11" x2="183.11" y1="765.5" y2="771.5" stroke="#e3e6ea" stroke-width="1"/>
<line x1="195.86" x2="195.86" y1="765.5" y2="771.5" stroke="#e3e6ea" stroke-width="1"/>
<line x1="208.61" x2="208.61" y1="765.5" y2="771.5" stroke="#e3e6ea" stroke-width="1"/>
<line x1="221.36" x2="221.36" y1="765.5" y2="771.5" stroke="#e3e6ea" stroke-width="1"/>
<line x1="234.11" x2="234.11" y1="765.5" y2="771.5" stroke="#e3e6ea" stroke-width="1"/>
<line x1="246.87" x2="246.87" y1="765.5" y2="771.5" stroke="#e3e6ea" stroke-width="1"/>
<line x1="259.62" x2="259.62" y1="765.5" y2="771.5" stroke="#e3e6ea" stroke-width="1"/>
<line x1="272.37" x2="272.37" y1="765.5" y2="771.5" stroke="#e3e6ea" stroke-width="1"/>
<line x1="285.12" x2="285.12" y1="765.5" y2="771.5" stroke="#e3e6ea" stroke-width="1"/>
<line x1="297.87" x2="297.87" y1="765.5" y2="771.5" stroke="#e3e6ea" stroke-width="1"/>
<line x1="310.62" x2="310.62" y1="765.5" y2="771.5" stroke="#e3e6ea" stroke-width="1"/>
<line x1="323.38" x2="323.38" y1="765.5" y2="771.5" stroke="#e3e6ea" stroke-width="1"/>
<line x1="336.13" x2="336.13" y1="765.5" y2="771.5" stroke="#e3e6ea" stroke-width="1"/>
<line x1="348.88" x2="348.88" y1="765.5" y2="771.5" stroke="#e3e6ea" stroke-width="1"/>
<line x1="361.63" x2="361.63" y1="765.5" y2="771.5" stroke="#e3e6ea" stroke-width="1"/>
<line x1="374.38" x2="374.38" y1="765.5" y2="771.5" stroke="#e3e6ea" stroke-width="1"/>
<line x1="387.14" x2="387.14" y1="765.5" y2="771.5" stroke="#e3e6ea" stroke-width="1"/>
<line x1="399.89" x2="399.89" y1="765.5" y2="771.5" stroke="#e3e6ea" stroke-width="1"/>
<line x1="412.64" x2="412.64" y1="765.5" y2="771.5" stroke="#e3e6ea" stroke-width="1"/>
<line x1="425.39" x2="425.39" y1="765.5" y2="771.5" stroke="#e3e6ea" stroke-width="1"/>
<line x1="438.14" x2="438.14" y1="765.5" y2="771.5" stroke="#e3e6ea" stroke-width="1"/>
<line x1="450.89" x2="450.89" y1="765.5" y2="771.5" stroke="#e3e6ea" stroke-width="1"/>
<line x1="463.65" x2="463.65" y1="765.5" y2="771.5" stroke="#e3e6ea" stroke-width="1"/>
<line x1="476.40" x2="476.40" y1="765.5" y2="771.5" stroke="#e3e6ea" stroke-width="1"/>
<line x1="489.15" x2="489.15" y1="765.5" y2="771.5" stroke="#e3e6ea" stroke-width="1"/>
<line x1="501.90" x2="501.90" y1="765.5" y2="771.5" stroke="#e3e6ea" stroke-width="1"/>
<line x1="514.65" x2="514.65" y1="765.5" y2="771.5" stroke="#e3e6ea" stroke-width="1"/>
<line x1="527.40" x2="527.40" y1="765.5" y2="771.5" stroke="#e3e6ea" stroke-width="1"/>
<line x1="540.16" x2="540.16" y1="765.5" y2="771.5" stroke="#e3e6ea" stroke-width="1"/>
<line x1="552.91" x2="552.91" y1="765.5" y2="771.5" stroke="#e3e6ea" stroke-width="1"/>
<line x1="565.66" x2="565.66" y1="765.5" y2="771.5" stroke="#e3e6ea" stroke-width="1"/>
<line x1="578.41" x2="578.41" y1="765.5" y2="771.5" stroke="#e3e6ea" stroke-width="1"/>
<line x1="591.16" x2="591.16" y1="765.5" y2="771.5" stroke="#e3e6ea" stroke-width="1"/>
<line x1="603.91" x2="603.91" y1="765.5" y2="771.5" stroke="#e3e6ea" stroke-width="1"/>
<line x1="616.67" x2="616.67" y1="765.5" y2="771.5" stroke="#e3e6ea" stroke-width="1"/>
<line x1="629.42" x2="629.42" y1="765.5" y2="771.5" stroke="#e3e6ea" stroke-width="1"/>
<line x1="642.17" x2="642.17" y1="765.5" y2="771.5" stroke="#e3e6ea" stroke-width="1"/>
<line x1="654.92" x2="654.92" y1="765.5" y2="771.5" stroke="#e3e6ea" stroke-width="1"/>
<line x1="667.67" x2="667.67" y1="765.5" y2="771.5" stroke="#e3e6ea" stroke-width="1"/>
<line x1="680.43" x2="680.43" y1="765.5" y2="771.5" stroke="#e3e6ea" stroke-width="1"/>
<line x1="693.18" x2="693.18" y1="765.5" y2="771.5" stroke="#e3e6ea" stroke-width="1"/>
<line x1="705.93" x2="705.93" y1="765.5" y2="771.5" stroke="#e3e6ea" stroke-width="1"/>
<line x1="718.68" x2="718.68" y1="765.5" y2="771.5" stroke="#e3e6ea" stroke-width="1"/>
<line x1="731.43" x2="731.43" y1="765.5" y2="771.5" stroke="#e3e6ea" stroke-width="1"/>
<line x1="744.18" x2="744.18" y1="765.5" y2="771.5" stroke="#e3e6ea" stroke-width="1"/>
<line x1="756.94" x2="756.94" y1="765.5" y2="771.5" stroke="#e3e6ea" stroke-width="1"/>
<line x1="769.69" x2="769.69" y1="765.5" y2="771.5" stroke="#e3e6ea" stroke-width="1"/>
<line x1="782.44" x2="782.44" y1="765.5" y2="771.5" stroke="#e3e6ea" stroke-width="1"/>
<line x1="795.19" x2="795.19" y1="765.5" y2="771.5" stroke="#e3e6ea" stroke-width="1"/>
<line x1="807.94" x2="807.94" y1="765.5" y2="771.5" stroke="#e3e6ea" stroke-width="1"/>
<line x1="820.69" x2="820.69" y1="765.5" y2="771.5" stroke="#e3e6ea" stroke-width="1"/>
<line x1="833.45" x2="833.45" y1="765.5" y2="771.5" stroke="#e3e6ea" stroke-width="1"/>
<line x1="846.20" x2="846.20" y1="765.5" y2="771.5" stroke="#e3e6ea" stroke-width="1"/>
<line x1="858.95" x2="858.95" y1="765.5" y2="771.5" stroke="#e3e6ea" stroke-width="1"/>
<line x1="871.70" x2="871.70" y1="765.5" y2="771.5" stroke="#e3e6ea" stroke-width="1"/>
<line x1="884.45" x2="884.45" y1="765.5" y2="771.5" stroke="#e3e6ea" stroke-width="1"/>
<line x1="897.21" x2="897.21" y1="765.5" y2="771.5" stroke="#e3e6ea" stroke-width="1"/>
<line x1="909.96" x2="909.96" y1="765.5" y2="771.5" stroke="#e3e6ea" stroke-width="1"/>
<line x1="922.71" x2="922.71" y1="765.5" y2="771.5" stroke="#e3e6ea" stroke-width="1"/>
<line x1="935.46" x2="935.46" y1="765.5" y2="771.5" stroke="#e3e6ea" stroke-width="1"/>
<line x1="948.21" x2="948.21" y1="765.5" y2="771.5" stroke="#e3e6ea" stroke-width="1"/>
<line x1="960.96" x2="960.96" y1="765.5" y2="771.5" stroke="#e3e6ea" stroke-width="1"/>
<line x1="973.72" x2="973.72" y1="765.5" y2="771.5" stroke="#e3e6ea" stroke-width="1"/>
<line x1="986.47" x2="986.47" y1="765.5" y2="771.5" stroke="#e3e6ea" stroke-width="1"/>
<line x1="999.22" x2="999.22" y1="765.5" y2="771.5" stroke="#e3e6ea" stroke-width="1"/>
<line x1="1011.97" x2="1011.97" y1="765.5" y2="771.5" stroke="#e3e6ea" stroke-width="1"/>
<line x1="1024.72" x2="1024.72" y1="765.5" y2="771.5" stroke="#e3e6ea" stroke-width="1"/>
<line x1="1037.47" x2="1037.47" y1="765.5" y2="771.5" stroke="#e3e6ea" stroke-width="1"/>
<line x1="1050.23" x2="1050.23" y1="765.5" y2="771.5" stroke="#e3e6ea" stroke-width="1"/>
<line x1="1062.98" x2="1062.98" y1="765.5" y2="771.5" stroke="#e3e6ea" stroke-width="1"/>
<line x1="1075.73" x2="1075.73" y1="765.5" y2="771.5" stroke="#e3e6ea" stroke-width="1"/>
<line x1="1088.48" x2="1088.48" y1="765.5" y2="771.5" stroke="#e3e6ea" stroke-width="1"/>
<line x1="1101.23" x2="1101.23" y1="765.5" y2="771.5" stroke="#e3e6ea" stroke-width="1"/>
<line x1="1113.99" x2="1113.99" y1="765.5" y2="771.5" stroke="#e3e6ea" stroke-width="1"/>
<line x1="1126.74" x2="1126.74" y1="765.5" y2="771.5" stroke="#e3e6ea" stroke-width="1"/>
<line x1="1139.49" x2="1139.49" y1="765.5" y2="771.5" stroke="#e3e6ea" stroke-width="1"/>
<line x1="1152.24" x2="1152.24" y1="765.5" y2="771.5" stroke="#e3e6ea" stroke-width="1"/>
<line x1="1164.99" x2="1164.99" y1="765.5" y2="771.5" stroke="#e3e6ea" stroke-width="1"/>
<line x1="1177.74" x2="1177.74" y1="765.5" y2="771.5" stroke="#e3e6ea" stroke-width="1"/>
<line x1="1190.50" x2="1190.50" y1="765.5" y2="771.5" stroke="#e3e6ea" stroke-width="1"/>
<line x1="1203.25" x2="1203.25" y1="765.5" y2="771.5" stroke="#e3e6ea" stroke-width="1"/>
<line x1="1216.00" x2="1216.00" y1="765.5" y2="771.5" stroke="#e3e6ea" stroke-width="1"/>
<line x1="1228.75" x2="1228.75" y1="765.5" y2="771.5" stroke="#e3e6ea" stroke-width="1"/>
<line x1="1241.50" x2="1241.50" y1="765.5" y2="771.5" stroke="#e3e6ea" stroke-width="1"/>
<line x1="1254.25" x2="1254.25" y1="765.5" y2="771.5" stroke="#e3e6ea" stroke-width="1"/>
<line x1="1267.01" x2="1267.01" y1="765.5" y2="771.5" stroke="#e3e6ea" stroke-width="1"/>
<line x1="1279.76" x2="1279.76" y1="765.5" y2="771.5" stroke="#e3e6ea" stroke-width="1"/>
<line x1="1292.51" x2="1292.51" y1="765.5" y2="771.5" stroke="#e3e6ea" stroke-width="1"/>
<line x1="1305.26" x2="1305.26" y1="765.5" y2="771.5" stroke="#e3e6ea" stroke-width="1"/>
<line x1="1318.01" x2="1318.01" y1="765.5" y2="771.5" stroke="#e3e6ea" stroke-width="1"/>
<line x1="1330.76" x2="1330.76" y1="765.5" y2="771.5" stroke="#e3e6ea" stroke-width="1"/>
<line x1="1343.52" x2="1343.52" y1="765.5" y2="771.5" stroke="#e3e6ea" stroke-width="1"/>
<line x1="1356.27" x2="1356.27" y1="765.5" y2="771.5" stroke="#e3e6ea" stroke-width="1"/>
<line x1="1369.02" x2="1369.02" y1="765.5" y2="771.5" stroke="#e3e6ea" stroke-width="1"/>
<line x1="1381.77" x2="1381.77" y1="765.5" y2="771.5" stroke="#e3e6ea" stroke-width="1"/>
<line x1="1394.52" x2="1394.52" y1="765.5" y2="771.5" stroke="#e3e6ea" stroke-width="1"/>
<line x1="1407.28" x2="1407.28" y1="765.5" y2="771.5" stroke="#e3e6ea" stroke-width="1"/>
<line x1="1420.03" x2="1420.03" y1="765.5" y2="771.5" stroke="#e3e6ea" stroke-width="1"/>
<line x1="1432.78" x2="1432.78" y1="765.5" y2="771.5" stroke="#e3e6ea" stroke-width="1"/>
<line x1="1445.53" x2="1445.53" y1="765.5" y2="771.5" stroke="#e3e6ea" stroke-width="1"/>
<line x1="1458.28" x2="1458.28" y1="765.5" y2="771.5" stroke="#e3e6ea" stroke-width="1"/>
<line x1="1471.03" x2="1471.03" y1="765.5" y2="771.5" stroke="#e3e6ea" stroke-width="1"/>
<line x1="1483.79" x2="1483.79" y1="765.5" y2="771.5" stroke="#e3e6ea" stroke-width="1"/>
<line x1="1496.54" x2="1496.54" y1="765.5" y2="771.5" stroke="#e3e6ea" stroke-width="1"/>
<line x1="1509.29" x2="1509.29" y1="765.5" y2="771.5" stroke="#e3e6ea" stroke-width="1"/>
<line x1="1522.04" x2="1522.04" y1="765.5" y2="771.5" stroke="#e3e6ea" stroke-width="1"/>
<line x1="1534.79" x2="1534.79" y1="765.5" y2="771.5" stroke="#e3e6ea" stroke-width="1"/>
<line x1="1547.54" x2="1547.54" y1="765.5" y2="771.5" stroke="#e3e6ea" stroke-width="1"/>
<line x1="1560.30" x2="1560.30" y1="765.5" y2="771.5" stroke="#e3e6ea" stroke-width="1"/>
<line x1="1573.05" x2="1573.05" y1="765.5" y2="771.5" stroke="#e3e6ea" stroke-width="1"/>
<line x1="1585.80" x2="1585.80" y1="765.5" y2="771.5" stroke="#e3e6ea" stroke-width="1"/>
<text transform="translate(142.48,776.8) rotate(-45)" text-anchor="end" class="xl">03/21/02</text>
<text transform="translate(167.98,776.8) rotate(-45)" text-anchor="end" class="xl">03/24/23</text>
<text transform="translate(193.48,776.8) rotate(-45)" text-anchor="end" class="xl">03/28/23</text>
<text transform="translate(218.99,776.8) rotate(-45)" text-anchor="end" class="xl">04/11/23</text>
<text transform="translate(244.49,776.8) rotate(-45)" text-anchor="end" class="xl">04/13/23</text>
<text transform="translate(269.99,776.8) rotate(-45)" text-anchor="end" class="xl">04/18/23</text>
<text transform="translate(295.50,776.8) rotate(-45)" text-anchor="end" class="xl">04/21/23</text>
<text transform="translate(321.00,776.8) rotate(-45)" text-anchor="end" class="xl">04/27/23</text>
<text transform="translate(346.50,776.8) rotate(-45)" text-anchor="end" class="xl">05/03/23</text>
<text transform="translate(372.01,776.8) rotate(-45)" text-anchor="end" class="xl">05/05/23</text>
<text transform="translate(397.51,776.8) rotate(-45)" text-anchor="end" class="xl">05/09/23</text>
<text transform="translate(423.01,776.8) rotate(-45)" text-anchor="end" class="xl">05/15/23</text>
<text transform="translate(448.52,776.8) rotate(-45)" text-anchor="end" class="xl">05/19/23</text>
<text transform="translate(474.02,776.8) rotate(-45)" text-anchor="end" class="xl">05/25/23</text>
<text transform="translate(499.52,776.8) rotate(-45)" text-anchor="end" class="xl">05/30/23</text>
<text transform="translate(525.03,776.8) rotate(-45)" text-anchor="end" class="xl">06/02/23</text>
<text transform="translate(550.53,776.8) rotate(-45)" text-anchor="end" class="xl">06/06/23</text>
<text transform="translate(576.04,776.8) rotate(-45)" text-anchor="end" class="xl">06/08/23</text>
<text transform="translate(601.54,776.8) rotate(-45)" text-anchor="end" class="xl">06/12/23</text>
<text transform="translate(627.04,776.8) rotate(-45)" text-anchor="end" class="xl">06/14/23</text>
<text transform="translate(652.55,776.8) rotate(-45)" text-anchor="end" class="xl">06/21/23</text>
<text transform="translate(678.05,776.8) rotate(-45)" text-anchor="end" class="xl">06/23/23</text>
<text transform="translate(703.55,776.8) rotate(-45)" text-anchor="end" class="xl">06/28/23</text>
<text transform="translate(729.06,776.8) rotate(-45)" text-anchor="end" class="xl">07/18/23</text>
<text transform="translate(754.56,776.8) rotate(-45)" text-anchor="end" class="xl">07/25/23</text>
<text transform="translate(780.06,776.8) rotate(-45)" text-anchor="end" class="xl">07/28/23</text>
<text transform="translate(805.57,776.8) rotate(-45)" text-anchor="end" class="xl">08/04/23</text>
<text transform="translate(831.07,776.8) rotate(-45)" text-anchor="end" class="xl">08/08/23</text>
<text transform="translate(856.57,776.8) rotate(-45)" text-anchor="end" class="xl">08/10/23</text>
<text transform="translate(882.08,776.8) rotate(-45)" text-anchor="end" class="xl">08/21/23</text>
<text transform="translate(907.58,776.8) rotate(-45)" text-anchor="end" class="xl">08/23/23</text>
<text transform="translate(933.08,776.8) rotate(-45)" text-anchor="end" class="xl">08/25/23</text>
<text transform="translate(958.59,776.8) rotate(-45)" text-anchor="end" class="xl">08/29/23</text>
<text transform="translate(984.09,776.8) rotate(-45)" text-anchor="end" class="xl">09/01/23</text>
<text transform="translate(1009.60,776.8) rotate(-45)" text-anchor="end" class="xl">09/06/23</text>
<text transform="translate(1035.10,776.8) rotate(-45)" text-anchor="end" class="xl">09/08/23</text>
<text transform="translate(1060.60,776.8) rotate(-45)" text-anchor="end" class="xl">09/12/23</text>
<text transform="translate(1086.11,776.8) rotate(-45)" text-anchor="end" class="xl">09/14/23</text>
<text transform="translate(1111.61,776.8) rotate(-45)" text-anchor="end" class="xl">09/18/23</text>
<text transform="translate(1137.11,776.8) rotate(-45)" text-anchor="end" class="xl">09/20/23</text>
<text transform="translate(1162.62,776.8) rotate(-45)" text-anchor="end" class="xl">09/25/23</text>
<text transform="translate(1188.12,776.8) rotate(-45)" text-anchor="end" class="xl">09/28/23</text>
<text transform="translate(1213.62,776.8) rotate(-45)" text-anchor="end" class="xl">10/02/23</text>
<text transform="translate(1239.13,776.8) rotate(-45)" text-anchor="end" class="xl">10/04/23</text>
<text transform="translate(1264.63,776.8) rotate(-45)" text-anchor="end" class="xl">10/06/23</text>
<text transform="translate(1290.13,776.8) rotate(-45)" text-anchor="end" class="xl">10/11/23</text>
<text transform="translate(1315.64,776.8) rotate(-45)" text-anchor="end" class="xl">10/13/23</text>
<text transform="translate(1341.14,776.8) rotate(-45)" text-anchor="end" class="xl">10/18/23</text>
<text transform="translate(1366.64,776.8) rotate(-45)" text-anchor="end" class="xl">10/20/23</text>
<text transform="translate(1392.15,776.8) rotate(-45)" text-anchor="end" class="xl">10/25/23</text>
<text transform="translate(1417.65,776.8) rotate(-45)" text-anchor="end" class="xl">10/30/23</text>
<text transform="translate(1443.15,776.8) rotate(-45)" text-anchor="end" class="xl">11/01/23</text>
<text transform="translate(1468.66,776.8) rotate(-45)" text-anchor="end" class="xl">11/03/23</text>
<text transform="translate(1494.16,776.8) rotate(-45)" text-anchor="end" class="xl">11/08/23</text>
<text transform="translate(1519.67,776.8) rotate(-45)" text-anchor="end" class="xl">11/10/23</text>
<text transform="translate(1545.17,776.8) rotate(-45)" text-anchor="end" class="xl">04/15/24</text>
<text transform="translate(1570.67,776.8) rotate(-45)" text-anchor="end" class="xl">05/07/24</text>
<text transform="translate(53,641) rotate(-90)" text-anchor="middle" style="font-size:11px;font-weight:bold;fill:#a8b0b8;font-family:'Liberation Sans',sans-serif">$</text>
<g stroke="#6e7681" stroke-width="2"><line x1="1571" x2="1585.6" y1="493" y2="493"/><line x1="1571" x2="1585.6" y1="497" y2="497"/><line x1="1571" x2="1585.6" y1="501" y2="501"/></g>
<rect x="776" y="823" width="11" height="11" rx="2" fill="#52d49a"/>
<rect x="818" y="823" width="11" height="11" rx="2" fill="#50b8da"/>
<text x="790.5" y="833" style="font-size:12px;fill:#9aa3ab;font-family:'Liberation Sans',sans-serif">Net</text>
<text x="832.5" y="833" style="font-size:12px;fill:#9aa3ab;font-family:'Liberation Sans',sans-serif">Gross</text>
</svg>
<!-- tooltip -->
<div class="abs" style="left:1008px;top:500px;width:134px;height:66px;background:#fff;border:1px solid #e3e3e3;border-radius:5px;box-shadow:2px 2px 6px -4px #999;overflow:hidden">
  <div style="height:29px;background:#eceff1;border-bottom:1px solid #ddd"></div>
</div>
<div class="abs" style="left:1014.5px;top:508px;font-size:12px;letter-spacing:0.3px;color:#4a4f52">09/06/23</div>
<div class="abs" style="left:1018px;top:543px;width:12px;height:11px;border-radius:50%;background:#4ab8d8"></div>
<div class="abs" style="left:1040px;top:541.5px;font-size:11.3px;color:#4a4f52">Gross:</div>
<div class="abs" style="left:1080px;top:541px;font-size:12px;color:#373d3f;-webkit-text-stroke:0.35px #373d3f;letter-spacing:0.25px">$8905.77</div>
</body></html>
